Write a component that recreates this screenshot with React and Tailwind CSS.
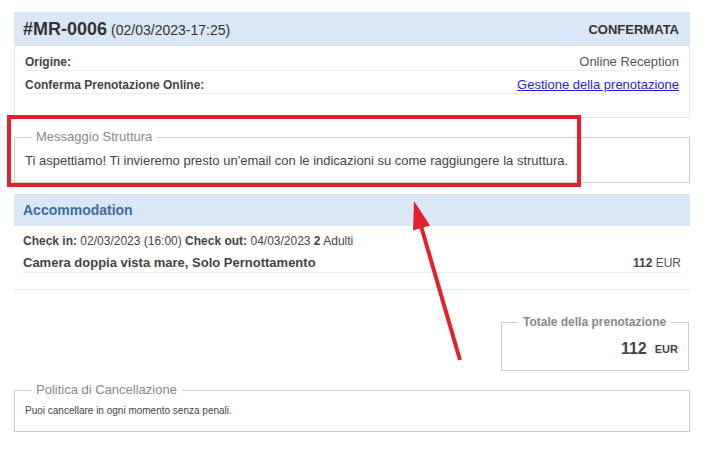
import React from 'react';

function Row({ label, children }) {
	return (
		<div className="flex items-center justify-between border-b border-[#eeeeee] pt-[6px] leading-[16px]">
			<span className="text-[12px] font-bold text-[#444]">{label}</span>
			<span className="text-[13px] text-[#555]">{children}</span>
		</div>
	);
}

export default function App() {
	return (
		<div className="relative min-h-[454px] bg-white font-['Liberation_Sans',Arial,sans-serif] text-[#444]">
			<div className="pl-[14px] pr-[23px] pt-[12px]">
				{/* booking card */}
				<div className="border border-[#dfe6ee]">
					<div className="flex h-[33px] items-center justify-between bg-[#d9e7f7] pl-[8px] pr-[10px] text-[#333]">
						<div className="flex items-baseline gap-[4px]">
							<span className="text-[18px] font-bold">#MR-0006</span>
							<span className="text-[14px]">(02/03/2023-17:25)</span>
						</div>
						<span className="text-[13px] font-bold">CONFERMATA</span>
					</div>
					<div className="px-[10px] pt-[2px] pb-[23px]">
						<Row label="Origine:">Online Reception</Row>
						<Row label="Conferma Prenotazione Online:">
							<a href="#" className="text-[#1f1fd6] underline">
								Gestione della prenotazione
							</a>
						</Row>
					</div>
				</div>

				{/* messaggio struttura */}
				<fieldset className="mt-[11px] border border-[#cccccc] px-[10px] pb-[13px]">
					<legend className="ml-[6px] px-[5px] text-[13px] leading-[16px] text-[#888]">Messaggio Struttura</legend>
					<p className="pt-[8px] text-[13px] leading-[16px] text-[#444]">
						Ti aspettiamo! Ti invieremo presto un'email con le indicazioni su come raggiungere la struttura.
					</p>
				</fieldset>

				{/* accommodation */}
				<div className="mt-[11px] border-b border-[#d6e6f6]">
					<div className="flex h-[32px] items-center bg-[#d9e7f7] px-[9px]">
						<span className="text-[14px] font-bold text-[#3f6b9b]">Accommodation</span>
					</div>
					<div className="px-[9px] pb-[16px]">
						<div className="pt-[7px] text-[12px] leading-[16px]">
							<b>Check in:</b> 02/03/2023 (16:00) <b>Check out:</b> 04/03/2023 <b>2</b> Adulti
						</div>
						<div className="flex items-center justify-between border-b border-[#eeeeee] pt-[6px] pb-[1px] leading-[16px]">
							<span className="text-[13px] font-bold">Camera doppia vista mare, Solo Pernottamento</span>
							<span className="text-[12px] text-[#555]">
								<b className="text-[#444]">112</b> EUR
							</span>
						</div>
					</div>
				</div>

				{/* totale */}
				<div className="flex justify-end pt-[24px]">
					<fieldset className="mr-[1px] w-[188px] border border-[#cccccc] pb-[12px] pr-[10px]">
						<legend className="ml-[16px] whitespace-nowrap px-[5px] text-[12px] font-bold leading-[16px] text-[#888]">
							Totale della prenotazione
						</legend>
						<div className="flex items-center justify-end gap-[8px] pt-[10px] leading-[18px] text-[#444]">
							<span className="text-[16px] font-bold">112</span>
							<span className="text-[11px] font-bold">EUR</span>
						</div>
					</fieldset>
				</div>

				{/* politica */}
				<fieldset className="mt-[11px] border border-[#cccccc] px-[10px] pb-[13px]">
					<legend className="ml-[6px] px-[5px] text-[13px] leading-[16px] text-[#888]">Politica di Cancellazione</legend>
					<p className="pt-[6px] text-[10px] leading-[14px] text-[#444]">Puoi cancellare in ogni momento senza penali.</p>
				</fieldset>
			</div>

			{/* annotation: red box + arrow */}
			<div className="pointer-events-none absolute left-[7px] top-[115px] h-[72px] w-[574px] border-[4px] border-[#e3202b]" />
			<svg className="pointer-events-none absolute left-0 top-0" width="713" height="454">
				<line x1="460" y1="360" x2="421" y2="226" stroke="#e3202b" strokeWidth="4" />
				<polygon points="414,201 430,225.5 413,230.5" fill="#e3202b" />
			</svg>
		</div>
	);
}
